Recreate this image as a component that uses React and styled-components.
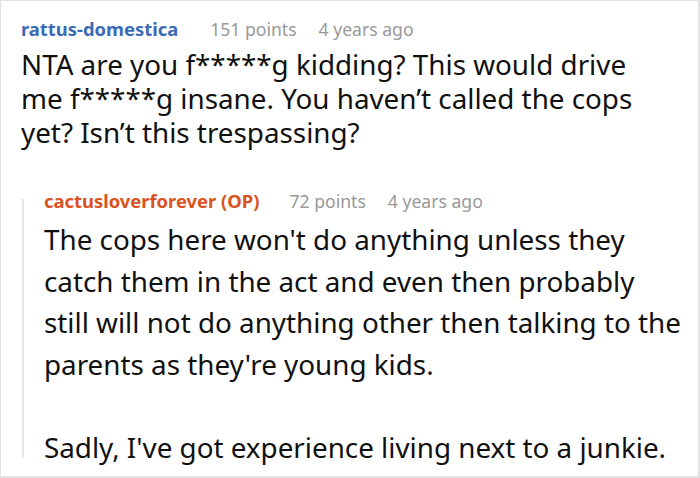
import React from "react";
import styled, { createGlobalStyle } from "styled-components";

const Global = createGlobalStyle`
  html, body { margin: 0; padding: 0; background: #fff; }
  body { font-family: "Noto Sans", "Open Sans", sans-serif; }
`;

const Frame = styled.div`
  box-sizing: border-box;
  width: 700px;
  height: 478px;
  border: 1px solid #e2e2e2;
  border-right-width: 2px;
  border-bottom-width: 2px;
  background: #fff;
  padding: 16px 0 0 20px;
  overflow: hidden;
`;

const Meta = styled.div`
  display: flex;
  align-items: baseline;
  line-height: 24px;
  white-space: nowrap;
`;

const User = styled.span`
  font-weight: 700;
  font-size: 18.4px;
  color: ${(p) => p.$color};
  margin-right: ${(p) => p.$after}px;
`;

const Stat = styled.span`
  color: #999;
  font-size: 17.6px;
  margin-right: 22px;
`;

const Body = styled.div`
  color: #111;
  font-size: 27.8px;
  line-height: ${(p) => p.$lh}px;
  margin-top: ${(p) => p.$top}px;
  white-space: pre-line;
`;

const Reply = styled.div`
  position: relative;
  margin-top: 40px;
  margin-left: 1px;
  padding-left: 22px;

  &::before {
    content: "";
    position: absolute;
    left: 0;
    top: 10px;
    bottom: 10px;
    width: 2px;
    background: #e6e6e6;
  }
`;

export default function App() {
  return (
    <>
      <Global />
      <Frame>
        <Meta>
          <User $color="#3a6bb6" $after={32}>rattus-domestica</User>
          <Stat>151 points</Stat>
          <Stat>4 years ago</Stat>
        </Meta>
        <Body $lh={34} $top={6}>
          {"NTA are you f*****g kidding? This would drive\nme f*****g insane. You haven’t called the cops\nyet? Isn’t this trespassing?"}
        </Body>
        <Reply>
          <Meta>
            <User $color="#d9531e" $after={30}>cactusloverforever (OP)</User>
            <Stat>72 points</Stat>
            <Stat>4 years ago</Stat>
          </Meta>
          <Body $lh={41.5} $top={6}>
            {"The cops here won't do anything unless they\ncatch them in the act and even then probably\nstill will not do anything other then talking to the\nparents as they're young kids.\n\nSadly, I've got experience living next to a junkie."}
          </Body>
        </Reply>
      </Frame>
    </>
  );
}
